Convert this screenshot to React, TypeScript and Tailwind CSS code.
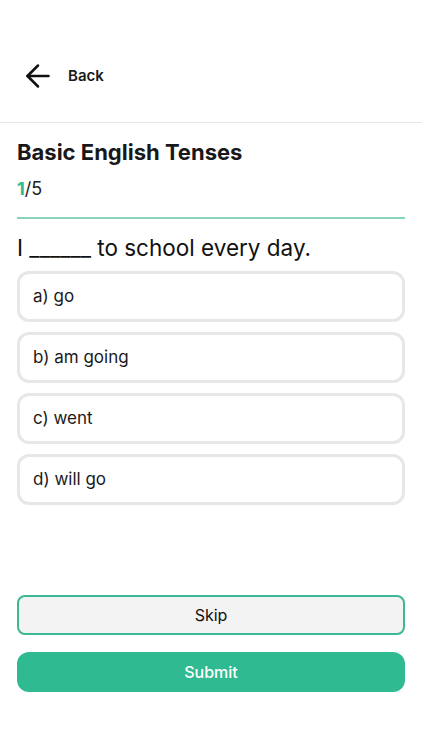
import React from "react";
import { ArrowLeft } from "lucide-react";

const options = ["a) go", "b) am going", "c) went", "d) will go"];

export default function App() {
  return (
    <div
      className="w-full min-h-screen bg-white text-[#111111]"
      style={{ fontFamily: "Inter, 'Noto Sans', sans-serif" }}
    >
      <div className="h-[123px] border-b border-[#e6e6e6] flex items-end pb-[28px] px-[20px]">
        <button className="flex items-center gap-[12px]">
          <ArrowLeft size={36} strokeWidth={1.7} className="text-[#111111]" />
          <span className="text-[15px] font-semibold text-[#1a1a1a]">Back</span>
        </button>
      </div>

      <div className="px-[17px]">
        <h1 className="mt-[15px] text-[22px] leading-[28px] font-bold text-[#18181b]">
          Basic English Tenses
        </h1>
        <div className="mt-[9px] text-[18px] leading-[28px] text-[#222]">
          <span className="font-bold text-[#2fba92]">1</span>/5
        </div>
        <div className="mt-[14px] h-[2px] bg-[#86d3be]" />

        <p className="mt-[15px] text-[22.5px] leading-[28px] text-[#111]">
          I ______ to school every day.
        </p>

        <div className="mt-[9px] flex flex-col gap-[10px]">
          {options.map((o) => (
            <div
              key={o}
              className="h-[51px] border-[3px] border-[#e7e7ea] rounded-[12px] flex items-center px-[13px] text-[17px] text-[#1a1a1a]"
            >
              {o}
            </div>
          ))}
        </div>

        <div className="mt-[90px] flex flex-col gap-[17px]">
          <button className="h-[40px] w-full rounded-[8px] border-2 border-[#3bb894] bg-[#f3f3f3] text-[16px] text-[#111]">
            Skip
          </button>
          <button className="h-[40px] w-full rounded-[12px] bg-[#2fba92] text-[16px] font-medium text-white">
            Submit
          </button>
        </div>
      </div>
    </div>
  );
}
